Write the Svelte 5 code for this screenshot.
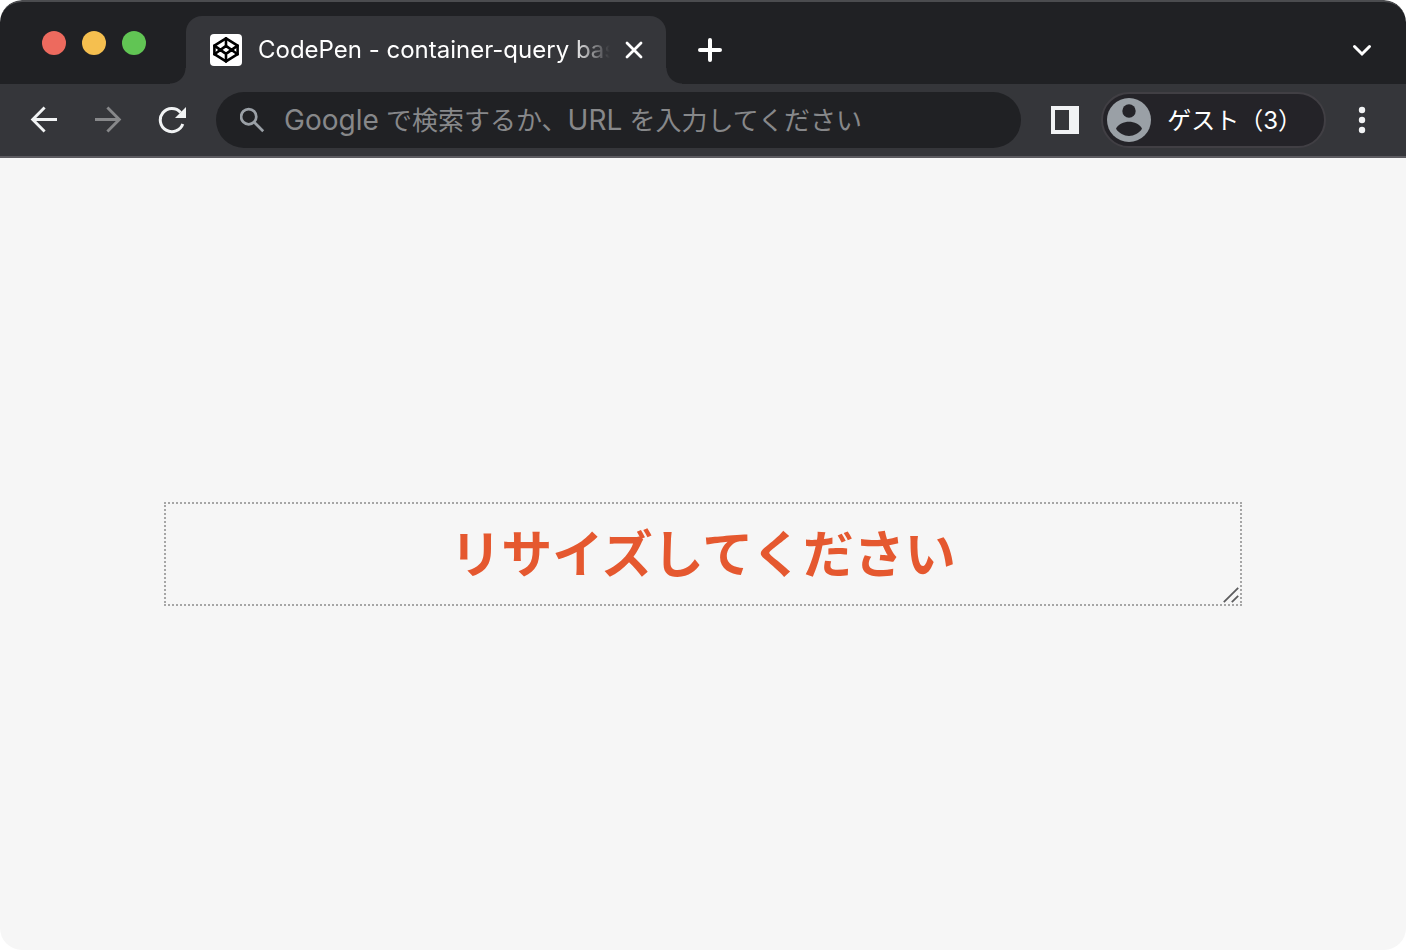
<script lang="ts">
  let address = $state('');
</script>

<div class="window">
  <header class="tabstrip">
    <div class="lights">
      <button class="light close" aria-label="Close window"></button>
      <button class="light minimise" aria-label="Minimise window"></button>
      <button class="light zoom" aria-label="Zoom window"></button>
    </div>

    <div class="tab">
      <span class="favicon">
        <svg width="28" height="28" viewBox="0 0 28 28" fill="none" stroke="#000" stroke-width="2.6" stroke-linejoin="round" stroke-linecap="round" aria-hidden="true">
          <path d="M14 2.4 25.6 9.6V18.2L14 25.4 2.4 18.2V9.6Z" />
          <path d="M14 2.4V10M14 18V25.4M2.4 9.6 14 17.9 25.6 9.6M2.4 18.2 14 9.9 25.6 18.2" />
        </svg>
      </span>
      <span class="tab-title">CodePen - container-query bas</span>
      <button class="icon tab-close" aria-label="Close tab">
        <svg width="20" height="20" viewBox="0 0 20 20" fill="none" stroke="#fff" stroke-width="2.8" stroke-linecap="round"><path d="M3 3 17 17M17 3 3 17" /></svg>
      </button>
    </div>

    <button class="icon new-tab" aria-label="New tab">
      <svg width="24" height="24" viewBox="0 0 24 24" fill="none" stroke="#fff" stroke-width="4" stroke-linecap="round"><path d="M12 2V22M2 12H22" /></svg>
    </button>

    <button class="icon tab-search" aria-label="Search tabs">
      <svg width="20" height="14" viewBox="0 0 20 14" fill="none" stroke="#fff" stroke-width="3" stroke-linecap="round" stroke-linejoin="miter"><path d="M2.5 3.5 10 11 17.5 3.5" /></svg>
    </button>
  </header>

  <div class="toolbar">
    <nav class="history" aria-label="History">
      <button class="icon" aria-label="Back">
        <svg width="28" height="28" viewBox="0 0 28 28" fill="none" stroke="#f1f3f4" stroke-width="2.9"><path d="M27 13.5H3M14.6 1.5 2.7 13.5 14.6 25.5" /></svg>
      </button>
      <button class="icon" aria-label="Forward">
        <svg width="28" height="28" viewBox="0 0 28 28" fill="none" stroke="#87888a" stroke-width="2.9"><path d="M1 13.5H25M13.4 1.5 25.3 13.5 13.4 25.5" /></svg>
      </button>
      <button class="icon" aria-label="Reload">
        <svg width="28" height="28" viewBox="0 0 28 28"><path d="M24.8 18A11.6 11.6 0 1 1 22.6 6.4" fill="none" stroke="#f1f3f4" stroke-width="3" /><path d="M28 1V12H17Z" fill="#f1f3f4" /></svg>
      </button>
    </nav>

    <div class="omnibox">
      <svg width="26" height="26" viewBox="1 0 26 26" fill="none" stroke="#9aa0a6" stroke-width="2.7" aria-hidden="true"><circle cx="9.7" cy="9.7" r="7.6" /><path d="M15 15 24.2 24.2" /></svg>
      <div class="field">
        <label for="address" class:filled={address !== ''}><span class="latin">Google</span> で検索するか、<span class="latin">URL</span> を入力してください</label>
        <input id="address" type="text" bind:value={address} />
      </div>
    </div>

    <button class="icon panel" aria-label="Side panel">
      <svg width="28" height="28" viewBox="0 0 28 28"><path d="M0 0H28V28H0ZM4 4V24H18V4Z" fill="#f1f3f4" fill-rule="evenodd" /></svg>
    </button>

    <button class="profile">
      <svg width="44" height="44" viewBox="0 0 44 44" aria-hidden="true">
        <circle cx="22" cy="22" r="22" fill="#9aa0a6" />
        <circle cx="22" cy="13" r="6.7" fill="#242328" />
        <path d="M9 30.8C11 26 17 23.8 22 23.8S33 26 35 30.8C32 35.4 27 37.9 22 37.9S12 35.4 9 30.8Z" fill="#242328" />
      </svg>
      <span>ゲスト（3）</span>
    </button>

    <button class="icon more" aria-label="Menu">
      <svg width="8" height="28" viewBox="0 0 8 28" fill="#f1f3f4"><circle cx="4" cy="4" r="3.2" /><circle cx="4" cy="14" r="3.2" /><circle cx="4" cy="24" r="3.2" /></svg>
    </button>
  </div>

  <main>
    <div class="container">
      <h1>リサイズしてください</h1>
      <svg class="grip" width="16" height="16" viewBox="0 0 16 16" stroke="#5c5c5e" stroke-width="1.8" aria-hidden="true"><path d="M.8 15.2 15.2.8M8.8 15.2 15.2 8.8" /></svg>
    </div>
  </main>
</div>

<style>
  :global(body) {
    background: #fff;
    font-family: Inter, 'Noto Sans CJK JP', sans-serif;
  }

  .window {
    display: flex;
    flex-direction: column;
    min-height: 100vh;
    border-radius: 22px;
    overflow: hidden;
    background: #f6f6f6;
  }

  button {
    padding: 0;
    border: 0;
    background: none;
    font: inherit;
    color: inherit;
  }

  svg {
    display: block;
    flex: none;
  }

  .icon {
    display: grid;
    place-items: center;
    flex: none;
  }

  .tabstrip {
    display: flex;
    align-items: flex-end;
    box-sizing: border-box;
    height: 84px;
    padding: 0 34px 0 42px;
    border-top: 2px solid #4b4c4f;
    border-radius: 22px 22px 0 0;
    background: #202124;
  }

  .lights {
    display: flex;
    gap: 16px;
    align-self: flex-start;
    padding-top: 29px;
  }

  .light {
    width: 24px;
    height: 24px;
    border-radius: 50%;
  }

  .close {
    background: #ed6a5e;
  }

  .minimise {
    background: #f5bf4f;
  }

  .zoom {
    background: #61c554;
  }

  .tab {
    position: relative;
    display: flex;
    align-items: center;
    box-sizing: border-box;
    flex: 0 1 480px;
    min-width: 0;
    height: 68px;
    margin-left: 40px;
    padding: 0 22px 0 24px;
    border-radius: 16px 16px 0 0;
    background: #35363a;
  }

  .tab::before,
  .tab::after {
    content: '';
    position: absolute;
    bottom: 0;
    width: 16px;
    height: 16px;
  }

  .tab::before {
    right: 100%;
    background: radial-gradient(circle at 0 0, transparent 15px, #35363a 16px);
  }

  .tab::after {
    left: 100%;
    background: radial-gradient(circle at 100% 0, transparent 15px, #35363a 16px);
  }

  .favicon {
    display: grid;
    place-items: center;
    flex: none;
    width: 32px;
    height: 32px;
    border-radius: 4px;
    background: #fff;
  }

  .tab-title {
    flex: 1;
    min-width: 0;
    margin: 0 8px 0 16px;
    overflow: hidden;
    white-space: nowrap;
    font-size: 24px;
    line-height: 32px;
    color: #fff;
    mask-image: linear-gradient(to left, transparent 6px, #000 44px);
  }

  .new-tab {
    height: 68px;
    margin-left: 32px;
  }

  .tab-search {
    height: 68px;
    margin-left: auto;
  }

  .toolbar {
    display: flex;
    align-items: center;
    box-sizing: border-box;
    height: 74px;
    padding: 0 40px 0 30px;
    border-bottom: 2px solid #5c5b60;
    background: #35363a;
  }

  .history {
    display: flex;
    gap: 36px;
  }

  .omnibox {
    display: flex;
    align-items: center;
    gap: 18px;
    flex: 1;
    min-width: 0;
    box-sizing: border-box;
    height: 56px;
    margin-left: 30px;
    padding: 0 24px;
    border-radius: 28px;
    background: #202124;
  }

  .field {
    display: grid;
    flex: 1;
    min-width: 0;
    font-size: 26px;
    line-height: 40px;
  }

  .field label,
  .field input {
    grid-area: 1 / 1;
    min-width: 0;
  }

  .field label {
    overflow: hidden;
    white-space: nowrap;
    color: #87888a;
  }

  .field label.filled {
    visibility: hidden;
  }

  .latin {
    font-size: 28px;
  }

  .field input {
    height: 40px;
    padding: 0;
    border: 0;
    outline: 0;
    background: none;
    font: inherit;
    color: #e8eaed;
  }

  .panel {
    margin-left: 30px;
  }

  .profile {
    display: flex;
    align-items: center;
    gap: 16px;
    box-sizing: border-box;
    flex: none;
    height: 56px;
    margin-left: 22px;
    padding: 0 22px 0 4px;
    border: 2px solid #413f44;
    border-radius: 28px;
    background: #242328;
    font-size: 24px;
    line-height: 32px;
    color: #fff;
    white-space: nowrap;
  }

  .profile span {
    padding-top: 2px;
  }

  .more {
    margin-left: 32px;
  }

  main {
    display: grid;
    flex: 1;
    align-items: center;
    padding: 24px 164px;
  }

  .container {
    position: relative;
    box-sizing: border-box;
    padding: 9px 12px 15px;
    border: 2px dotted #a6a6a6;
    overflow: hidden;
    resize: both;
  }

  .container::-webkit-resizer {
    background: transparent;
  }

  h1 {
    margin: 0;
    font-family: 'Noto Sans CJK JP', sans-serif;
    font-size: 51px;
    font-weight: 700;
    line-height: 76px;
    text-align: center;
    color: #e5582f;
  }

  .grip {
    position: absolute;
    right: 1px;
    bottom: 1px;
    pointer-events: none;
  }
</style>
